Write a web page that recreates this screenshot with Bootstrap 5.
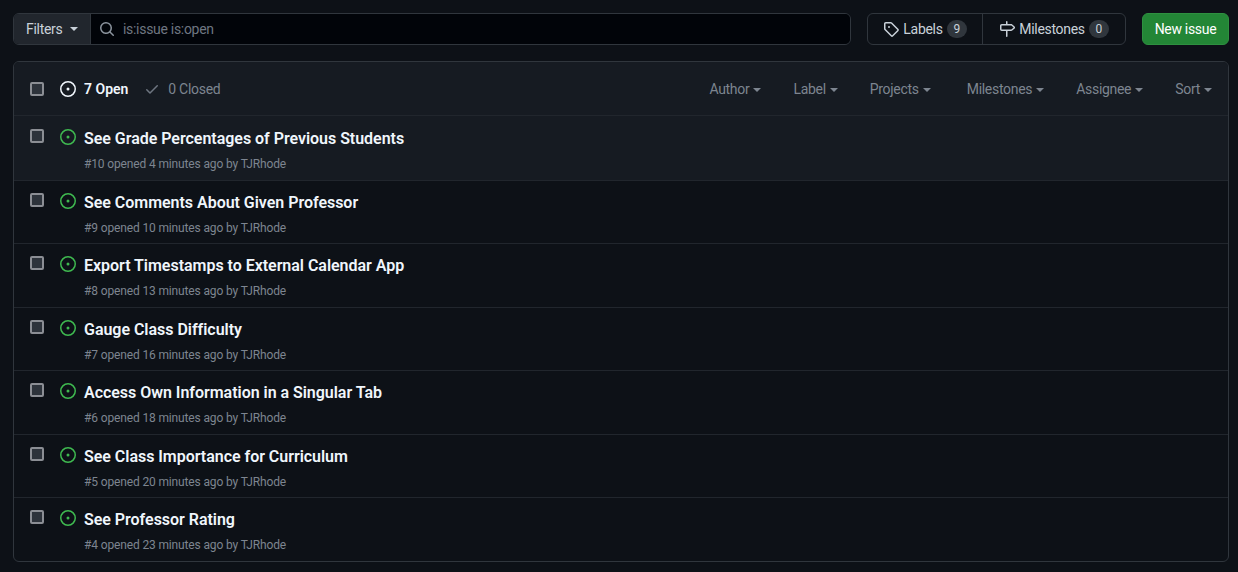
<!DOCTYPE html>
<html>
  <head>
    <title>Issues</title>
    <link href="https://cdn.jsdelivr.net/npm/bootstrap@5.3.3/dist/css/bootstrap.min.css" rel="stylesheet" />
    <script src="https://cdn.jsdelivr.net/npm/bootstrap@5.3.3/dist/js/bootstrap.bundle.min.js"></script>
    <style>
      body { background: #0d1117; color: #c9d1d9; font-family: Roboto, "Noto Sans", sans-serif; font-size: 14px; line-height: 20px; letter-spacing: -0.3px; padding: 13px 9px 0 13px; overflow: hidden; }
      .top-bar { height: 32px; margin-bottom: 16px; }
      .filter-group { border: 1px solid #30363d; border-radius: 6px; overflow: hidden; }
      .filter-btn { width: 77px; background: #21262d; border-right: 1px solid #30363d; color: #c9d1d9; padding-left: 12px; }
      .search-box { background: #010409; color: #6e7681; padding-left: 8px; gap: 8px; }
      .caret-down { display: inline-block; border-top: 4px solid currentColor; border-left: 4px solid transparent; border-right: 4px solid transparent; }
      .nav-group { width: 259px; border: 1px solid #30363d; border-radius: 6px; margin-left: 16px; }
      .nav-group a { color: #c9d1d9; text-decoration: none; gap: 4px; }
      .nav-group a + a { border-left: 1px solid #30363d; }
      .nav-labels { width: 114px; }
      .count-pill { background: #30363d; border-radius: 20px; font-size: 12px; line-height: 18px; min-width: 20px; text-align: center; }
      .new-btn { width: 87px; margin-left: 16px; background: #238636; border: 1px solid #2e9040; border-radius: 6px; color: #fff; }
      .issue-box { border: 1px solid #30363d; border-radius: 6px; overflow: hidden; }
      .box-head { height: 53px; background: #161b22; padding-left: 16px; padding-right: 16px; }
      .check-square { width: 14px; height: 14px; flex: none; background: #2d333b; border: 2px solid #8b8e94; border-radius: 2px; }
      .state-open { color: #f0f6fc; font-weight: 600; letter-spacing: 0; }
      .state-closed { color: #7d8590; }
      .head-filter { color: #7d8590; margin-left: 32px; gap: 4px; }
      .head-filter.wide-gap { margin-left: 36px; }
      .head-filter .caret-down { margin-top: 2px; }
      .issue-row { height: 63.5px; border-top: 1px solid #21262d; padding: 12px 0 0 16px; }
      .issue-row.is-hover { background: #161b22; height: 64.5px; padding-top: 13px; }
      .issue-icon { margin-left: 16px; margin-right: 8px; flex: none; }
      .issue-title { color: #f0f6fc; font-size: 16px; font-weight: 600; line-height: 20px; letter-spacing: -0.03px; }
      .issue-meta { color: #7d8590; font-size: 12px; line-height: 18px; letter-spacing: -0.14px; margin-top: 6px; }
    </style>
  </head>
  <body>
    <div class="top-bar d-flex">
      <div class="filter-group d-flex flex-grow-1">
        <div class="filter-btn d-flex align-items-center gap-2">Filters <span class="caret-down"></span></div>
        <div class="search-box d-flex align-items-center flex-grow-1">
          <svg width="16" height="16" viewBox="0 0 16 16" fill="#8b949e"><path d="M10.68 11.74a6 6 0 0 1-7.922-8.982 6 6 0 0 1 8.982 7.922l3.04 3.04a.749.749 0 0 1-.326 1.275.749.749 0 0 1-.734-.215ZM11.5 7a4.499 4.499 0 1 0-8.997 0A4.499 4.499 0 0 0 11.5 7Z"/></svg>
          <span>is:issue is:open</span>
        </div>
      </div>
      <div class="nav-group d-flex">
        <a class="nav-labels d-flex align-items-center justify-content-center" href="#">
          <svg width="16" height="16" viewBox="0 0 16 16" fill="#c9d1d9"><path d="M1 7.775V2.75C1 1.784 1.784 1 2.75 1h5.025c.464 0 .91.184 1.238.513l6.25 6.25a1.75 1.75 0 0 1 0 2.474l-5.026 5.026a1.75 1.75 0 0 1-2.474 0l-6.25-6.25A1.752 1.752 0 0 1 1 7.775Zm1.5 0c0 .066.026.13.073.177l6.25 6.25a.25.25 0 0 0 .354 0l5.025-5.025a.25.25 0 0 0 0-.354l-6.25-6.25a.25.25 0 0 0-.177-.073H2.75a.25.25 0 0 0-.25.25ZM6 5a1 1 0 1 1 0 2 1 1 0 0 1 0-2Z"/></svg>
          Labels <span class="count-pill">9</span>
        </a>
        <a class="flex-grow-1 d-flex align-items-center justify-content-center" href="#">
          <svg width="16" height="16" viewBox="0 0 16 16" fill="#c9d1d9"><path d="M7.75 0a.75.75 0 0 1 .75.75V3h3.634c.414 0 .814.147 1.13.414l2.07 1.75a1.75 1.75 0 0 1 0 2.672l-2.07 1.75a1.75 1.75 0 0 1-1.13.414H8.5v5.25a.75.75 0 0 1-1.5 0V10H2.75A1.75 1.75 0 0 1 1 8.25v-3.5C1 3.784 1.784 3 2.75 3H7V.75A.75.75 0 0 1 7.75 0Zm4.384 8.5a.25.25 0 0 0 .161-.06l2.07-1.75a.248.248 0 0 0 0-.38l-2.07-1.75a.25.25 0 0 0-.161-.06H2.75a.25.25 0 0 0-.25.25v3.5c0 .138.112.25.25.25h9.384Z"/></svg>
          Milestones <span class="count-pill">0</span>
        </a>
      </div>
      <div class="new-btn d-flex align-items-center justify-content-center">New issue</div>
    </div>

    <div class="issue-box">
      <div class="box-head d-flex align-items-center">
        <span class="check-square"></span>
        <svg class="issue-icon" width="16" height="16" viewBox="0 0 16 16" fill="#f0f6fc"><path d="M8 9.5a1.5 1.5 0 1 0 0-3 1.5 1.5 0 0 0 0 3Z"/><path d="M8 0a8 8 0 1 1 0 16A8 8 0 0 1 8 0ZM1.5 8a6.5 6.5 0 1 0 13 0 6.5 6.5 0 0 0-13 0Z"/></svg>
        <span class="state-open">7 Open</span>
        <svg class="ms-3 me-2" width="16" height="16" viewBox="0 0 16 16" fill="#6e7681"><path d="M13.78 4.22a.75.75 0 0 1 0 1.06l-7.25 7.25a.75.75 0 0 1-1.06 0L2.22 9.28a.751.751 0 0 1 1.06-1.06L6 10.94l6.72-6.72a.75.75 0 0 1 1.06 0Z"/></svg>
        <span class="state-closed">0 Closed</span>
        <div class="ms-auto d-flex">
          <span class="head-filter d-flex align-items-center">Author <span class="caret-down"></span></span>
          <span class="head-filter d-flex align-items-center">Label <span class="caret-down"></span></span>
          <span class="head-filter d-flex align-items-center">Projects <span class="caret-down"></span></span>
          <span class="head-filter wide-gap d-flex align-items-center">Milestones <span class="caret-down"></span></span>
          <span class="head-filter d-flex align-items-center">Assignee <span class="caret-down"></span></span>
          <span class="head-filter d-flex align-items-center">Sort <span class="caret-down"></span></span>
        </div>
      </div>
      <div id="issueList"></div>
    </div>

    <script>
      const issues = [
        { id: 10, title: "See Grade Percentages of Previous Students", age: "4 minutes" },
        { id: 9, title: "See Comments About Given Professor", age: "10 minutes" },
        { id: 8, title: "Export Timestamps to External Calendar App", age: "13 minutes" },
        { id: 7, title: "Gauge Class Difficulty", age: "16 minutes" },
        { id: 6, title: "Access Own Information in a Singular Tab", age: "18 minutes" },
        { id: 5, title: "See Class Importance for Curriculum", age: "20 minutes" },
        { id: 4, title: "See Professor Rating", age: "23 minutes" }
      ]

      const issueList = document.querySelector("#issueList")

      for (let i = 0; i < issues.length; i++) {
        const row = document.createElement("div")
        row.className = "issue-row d-flex" + (i === 0 ? " is-hover" : "")
        row.innerHTML = `<span class="check-square"></span>
          <svg class="issue-icon" width="16" height="16" viewBox="0 0 16 16" fill="#3fb950"><path d="M8 9.5a1.5 1.5 0 1 0 0-3 1.5 1.5 0 0 0 0 3Z"/><path d="M8 0a8 8 0 1 1 0 16A8 8 0 0 1 8 0ZM1.5 8a6.5 6.5 0 1 0 13 0 6.5 6.5 0 0 0-13 0Z"/></svg>
          <div>
            <div class="issue-title">${issues[i].title}</div>
            <div class="issue-meta">#${issues[i].id} opened ${issues[i].age} ago by TJRhode</div>
          </div>`
        issueList.appendChild(row)
      }
    </script>
  </body>
</html>
